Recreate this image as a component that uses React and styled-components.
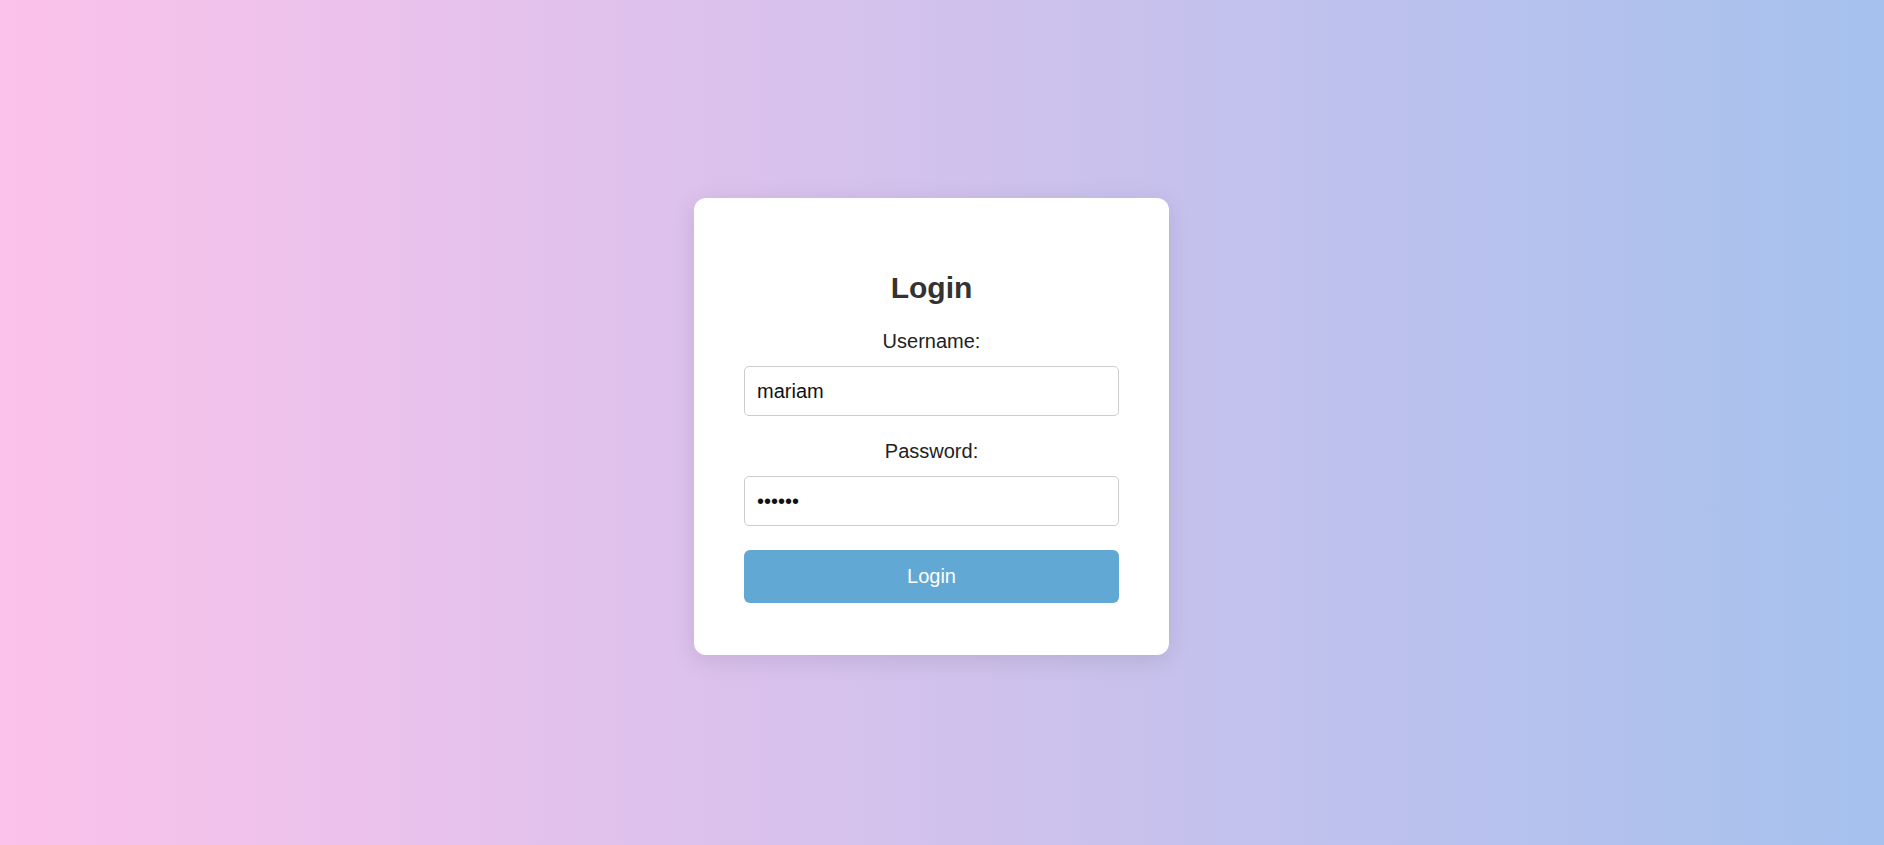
import React, { useState } from "react";
import styled, { createGlobalStyle } from "styled-components";

const GlobalStyle = createGlobalStyle`
	html, body {
		margin: 0;
		padding: 0;
	}
	body {
		font-family: "Liberation Sans", Arial, sans-serif;
	}
`;

const Page = styled.div`
	display: flex;
	align-items: center;
	justify-content: center;
	min-height: 100vh;
	box-sizing: border-box;
	padding: 8px 21px 0 0;
	background: linear-gradient(to right, #fbc2eb, #a6c1ee);
`;

const Card = styled.form`
	width: 475px;
	box-sizing: border-box;
	padding: 50px 50px 52px;
	background-color: white;
	border-radius: 12px;
	box-shadow: 0 5px 25px rgba(0, 0, 0, 0.1);
	display: flex;
	flex-direction: column;
`;

const Title = styled.h2`
	margin: 23px 0 25px;
	font-size: 30px;
	line-height: 34px;
	font-weight: bold;
	color: #333;
	text-align: center;
`;

const Label = styled.label`
	display: block;
	margin-bottom: 14px;
	font-size: 20px;
	line-height: 22px;
	color: #222;
	text-align: center;
`;

const Input = styled.input`
	display: block;
	width: 100%;
	height: 50px;
	box-sizing: border-box;
	margin-bottom: 24px;
	padding: 0 12px;
	border: 1px solid #ccc;
	border-radius: 5px;
	font-family: inherit;
	font-size: 20px;
	color: #111;
	outline: none;
`;

const Button = styled.button`
	width: 100%;
	height: 53px;
	border: none;
	border-radius: 6px;
	background-color: #62a8d4;
	color: white;
	font-family: inherit;
	font-size: 20px;
	cursor: pointer;

	:hover {
		background-color: #4f98c6;
	}
`;

export default function App() {
	const [username, setUsername] = useState("mariam");
	const [password, setPassword] = useState("123456");

	return (
		<>
			<GlobalStyle />
			<Page>
				<Card onSubmit={(e) => e.preventDefault()}>
					<Title>Login</Title>
					<Label htmlFor="username">Username:</Label>
					<Input
						id="username"
						type="text"
						value={username}
						onChange={(e) => setUsername(e.target.value)}
					/>
					<Label htmlFor="password">Password:</Label>
					<Input
						id="password"
						type="password"
						value={password}
						onChange={(e) => setPassword(e.target.value)}
					/>
					<Button type="submit">Login</Button>
				</Card>
			</Page>
		</>
	);
}
